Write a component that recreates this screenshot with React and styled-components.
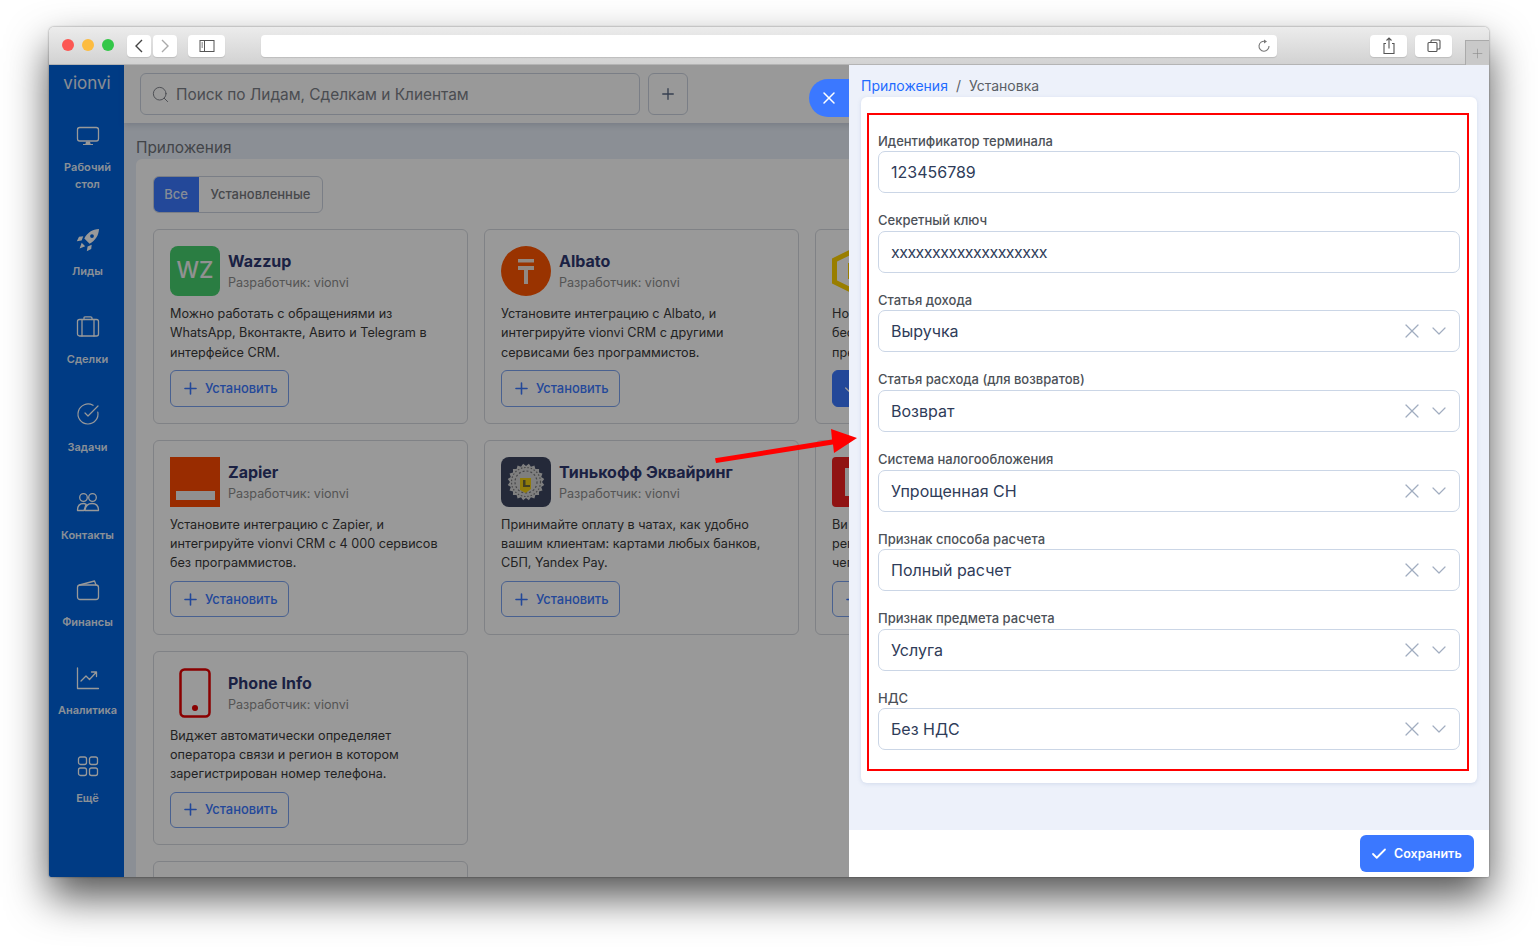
import React from "react";
import styled, { createGlobalStyle } from "styled-components";
import { X, ChevronDown, Check, Plus, Search, CircleCheckBig } from "lucide-react";

const GlobalStyle = createGlobalStyle`
  html, body {
    margin: 0;
    height: 948px;
    overflow: hidden;
    background: #fff;
    font-family: Inter, "Noto Sans", sans-serif;
  }
  * { box-sizing: border-box; }
`;

const Page = styled.div`
  padding: 27px 49px 0;
`;

const Window = styled.div`
  width: 1440px;
  height: 850px;
  border-radius: 5px 5px 2px 2px;
  box-shadow: 0 20px 42px rgba(0, 0, 0, 0.68), 0 0 2px rgba(0, 0, 0, 0.5);
  display: flex;
  flex-direction: column;
  overflow: hidden;
`;

const TitleBar = styled.div`
  height: 38px;
  flex: none;
  display: flex;
  align-items: flex-start;
  padding: 8px 0 0 13px;
  background: linear-gradient(#ececec, #d2d2d2);
  border-bottom: 1px solid #b4b4b4;
`;

const Light = styled.span`
  width: 12px;
  height: 12px;
  margin: 4px 8px 0 0;
  border-radius: 50%;
  background: ${(p) => p.$color};
`;

const ChromeButton = styled.div`
  width: ${(p) => p.$w}px;
  height: 22px;
  margin-left: ${(p) => p.$ml}px;
  background: #fff;
  border-radius: 4px;
  box-shadow: 0 1px 1px rgba(0, 0, 0, 0.12);
  display: flex;
  align-items: center;
  justify-content: center;
  color: ${(p) => p.$color || "#555"};
`;

const UrlBar = styled.div`
  width: 1016px;
  height: 22px;
  margin-left: 36px;
  padding-right: 6px;
  background: #fff;
  border-radius: 4px;
  box-shadow: 0 1px 1px rgba(0, 0, 0, 0.12);
  display: flex;
  align-items: center;
  justify-content: flex-end;
  color: #777;
`;

const NewTab = styled.div`
  width: 24px;
  height: 25px;
  margin: 5px 0 0 13px;
  background: #c9c9c9;
  border: 1px solid #aaa;
  border-right: 0;
  border-bottom: 0;
  color: #8a8a8a;
  display: flex;
  align-items: center;
  justify-content: center;
`;

const AppFrame = styled.div`
  position: relative;
  flex: 1;
  display: flex;
  overflow: hidden;
  background: #e8eef8;
`;

const Sidebar = styled.nav`
  width: 75px;
  flex: none;
  background: #0063dd;
  display: flex;
  flex-direction: column;
  align-items: center;
`;

const Logo = styled.div`
  height: 58.5px;
  padding: 5px 0 0 1px;
  font-size: 17px;
  line-height: 26px;
  font-weight: 400;
  color: #e6ecf5;
`;

const NavItem = styled.div`
  width: 75px;
  display: flex;
  flex-direction: column;
  align-items: center;
  padding: 0 0 35.8px 2px;
  color: #fff;
`;

const NavLabel = styled.span`
  margin-top: 11.5px;
  width: 66px;
  text-align: center;
  font-size: 11px;
  line-height: 16.5px;
  font-weight: 600;
  color: rgba(255, 255, 255, 0.92);
`;

const Main = styled.main`
  flex: 1;
  min-width: 0;
  display: flex;
  flex-direction: column;
`;

const TopBar = styled.header`
  height: 58px;
  flex: none;
  background: #fff;
  display: flex;
  gap: 8px;
  padding: 8px 16px;
  box-shadow: 0 2px 6px rgba(60, 80, 110, 0.2);
`;

const SearchBox = styled.div`
  width: 500px;
  height: 42px;
  border: 1px solid #ccd3df;
  border-radius: 6px;
  display: flex;
  align-items: center;
  padding-left: 10px;
  gap: 6px;
  font-size: 15.4px;
  color: #7c8088;
`;

const AddButton = styled.div`
  width: 40px;
  height: 42px;
  border: 1px solid #ccd3df;
  border-radius: 6px;
  display: flex;
  align-items: center;
  justify-content: center;
  color: #5a6a85;
`;

const PageTitle = styled.h1`
  margin: 14px 0 0 12px;
  font-size: 15.4px;
  line-height: 22px;
  font-weight: 400;
  color: #6f737a;
`;

const Panel = styled.section`
  flex: 1;
  margin-left: 12px;
  padding: 17px;
  background: #fff;
  border-radius: 6px 0 0 0;
`;

const Tabs = styled.div`
  display: inline-flex;
  height: 37px;
  border: 1px solid #ccd3df;
  border-radius: 6px;
  overflow: hidden;
  margin-bottom: 16px;
`;

const Tab = styled.div`
  padding: 0 11.3px 2px;
  margin: ${(p) => (p.$active ? "-1px 0 -1px -1px" : "0")};
  display: flex;
  align-items: center;
  font-size: 13px;
  font-weight: 500;
  background: ${(p) => (p.$active ? "#3b78ff" : "transparent")};
  color: ${(p) => (p.$active ? "#dfe8fa" : "#77797e")};
`;

const CardGrid = styled.div`
  display: grid;
  grid-template-columns: repeat(4, 315px);
  grid-auto-rows: 194.8px;
  gap: 16px;
`;

const Card = styled.article`
  border: 1px solid #d6d9df;
  border-radius: 6px;
  padding: 16px;
`;

const CardHead = styled.div`
  display: flex;
  gap: 8px;
  height: 50px;
  align-items: center;
`;

const CardHeadText = styled.div`
  padding-top: 2px;
`;

const CardLogo = styled.div`
  width: 50px;
  height: 50px;
  flex: none;
  border-radius: ${(p) => p.$radius || 0};
  background: ${(p) => p.$bg || "transparent"};
  display: flex;
  align-items: center;
  justify-content: center;
  overflow: hidden;
`;

const WzMark = styled.span`
  font-size: 22.5px;
  line-height: 24px;
  padding-bottom: 2px;
  font-weight: 500;
  color: #f2f2f2;
`;

const CardTitle = styled.div`
  font-size: 16px;
  line-height: 21px;
  font-weight: 700;
  color: #2e3770;
  white-space: nowrap;
`;

const CardVendor = styled.div`
  font-size: 12.6px;
  line-height: 21px;
  color: #8d8d8d;
`;

const CardText = styled.p`
  margin: 8px 0 8px;
  height: 58px;
  font-size: 12.65px;
  line-height: 19.3px;
  color: #3a3a3a;
  white-space: pre-line;
`;

const InstallButton = styled.div`
  width: 119px;
  height: 36.5px;
  border: 1px solid ${(p) => (p.$filled ? "#3b78ff" : "#7ba2f0")};
  background: ${(p) => (p.$filled ? "#3b78ff" : "transparent")};
  border-radius: 6px;
  display: flex;
  align-items: center;
  padding-left: 10px;
  gap: 5px;
  font-size: 12.9px;
  font-weight: 500;
  color: ${(p) => (p.$filled ? "#fff" : "#3b78ff")};
`;

const Backdrop = styled.div`
  position: absolute;
  inset: 0;
  background: rgba(0, 0, 0, 0.4);
`;

const Drawer = styled.aside`
  position: absolute;
  top: 0;
  right: 0;
  bottom: 0;
  width: 640px;
  background: #edf1fa;
  display: flex;
  flex-direction: column;
`;

const CloseTab = styled.div`
  position: absolute;
  left: -40px;
  top: 14px;
  width: 40px;
  height: 38px;
  border-radius: 19px 0 0 19px;
  background: #3b78ff;
  color: #fff;
  display: flex;
  align-items: center;
  justify-content: center;
`;

const Breadcrumbs = styled.div`
  height: 32px;
  padding: 11px 12px 0;
  display: flex;
  gap: 8px;
  font-size: 14px;
  line-height: 20px;
  color: #5b5f66;
`;

const CrumbLink = styled.span`
  color: #1f6bff;
`;

const FormCard = styled.div`
  margin: 0 12px;
  padding: 16px 8px 12px 6px;
  background: #fff;
  border-radius: 6px;
  box-shadow: 0 1px 4px rgba(90, 120, 180, 0.18);
`;

const RedFrame = styled.div`
  border: 2px solid #ff0000;
  padding: 14.6px 7px 2.8px 9px;
`;

const Field = styled.div`
  margin-bottom: 16px;
`;

const FieldLabel = styled.label`
  display: block;
  height: 21.6px;
  font-size: 13px;
  line-height: 22.6px;
  font-weight: 500;
  color: #4c5158;
`;

const FieldBox = styled.div`
  height: 42px;
  border: 1px solid #cbd6e6;
  border-radius: 7px;
  display: flex;
  align-items: center;
  padding: 0 8px 0 12px;
  font-size: 16px;
  color: #2f3c59;
`;

const FieldValue = styled.span`
  flex: 1;
  letter-spacing: ${(p) => (p.$masked ? "-0.53px" : "0")};
`;

const FieldIcons = styled.span`
  display: flex;
  align-items: center;
  gap: 3px;
  color: #a1adc0;
`;

const Footer = styled.footer`
  margin-top: auto;
  height: 47px;
  flex: none;
  background: #fff;
  display: flex;
  justify-content: flex-end;
  padding: 5px 15px;
`;

const SaveButton = styled.div`
  width: 114px;
  height: 37px;
  background: #3b78ff;
  border-radius: 6px;
  display: flex;
  align-items: center;
  padding-left: 10px;
  gap: 6px;
  font-size: 12.5px;
  font-weight: 600;
  color: #fff;
`;

const ArrowMark = styled.svg`
  position: absolute;
  left: 660px;
  top: 355px;
`;

const HiddenSlot = styled.div`
  visibility: hidden;
`;

const stroke = { fill: "none", stroke: "currentColor", strokeWidth: 1.3, strokeLinecap: "round", strokeLinejoin: "round" };

function NavIcon({ children }) {
  return (
    <svg width="24" height="24" viewBox="0 0 24 24" {...stroke}>
      {children}
    </svg>
  );
}

const navItems = [
  {
    label: "Рабочий стол",
    icon: (
      <NavIcon>
        <rect x="1.5" y="3.500" width="21" height="13.5" rx="2.2" />
        <path d="M10 17.500h4l.6 2.500H17v1H7v-1h2.400z" fill="currentColor" stroke="none" />
      </NavIcon>
    ),
  },
  {
    label: "Лиды",
    icon: (
      <svg width="24" height="24" viewBox="0 0 24 24" fill="currentColor">
        <path
          fillRule="evenodd"
          d="M23 1C16.500 1.300 11.500 4.500 8.300 10.400l5.300 5.300C19.500 12.500 22.700 7.500 23 1zM16 6.200a1.900 1.900 0 1 1 0 3.800 1.900 1.900 0 0 1 0-3.800z"
        />
        <path d="M7.300 8.300 3 8.800.8 13.200l4.800-.8zM15.700 16.700l-.5 4.300-4.400 2.200.8-4.800zM5.700 14.800 3.600 20.400l5.600-2.100z" />
      </svg>
    ),
  },
  {
    label: "Сделки",
    icon: (
      <NavIcon>
        <rect x="1.5" y="3.500" width="21" height="16.5" rx="2" />
        <path d="M6 3.500V20M18 3.500V20M8 3.500V2Q8 .8 9.500 .8h5Q16 .8 16 2v1.500" />
      </NavIcon>
    ),
  },
  { label: "Задачи", icon: <CircleCheckBig size={24} strokeWidth={1.2} style={{ marginTop: -1, marginBottom: 1 }} /> },
  {
    label: "Контакты",
    icon: (
      <NavIcon>
        <circle cx="7.500" cy="6.500" r="3.800" />
        <circle cx="16.500" cy="6.500" r="3.800" />
        <path d="M1.500 19.500c0-5 3-7 6-7 1 0 1.800.3 2.600.8L8 19.500zM9 19.500c.5-5 3.500-7 7-7s6.500 2 6.500 7z" />
      </NavIcon>
    ),
  },
  {
    label: "Финансы",
    icon: (
      <NavIcon>
        <rect x="1.5" y="6" width="21" height="14.500" rx="2.500" />
        <path d="M3.500 6 18.500 2 20 6" />
      </NavIcon>
    ),
  },
  {
    label: "Аналитика",
    icon: (
      <NavIcon>
        <path d="M1.500 1V21.500H22.500" />
        <path d="M5 14l5-5 3.500 3.500L20 5.500M15.500 5H20.500V9.500" />
      </NavIcon>
    ),
  },
  {
    label: "Ещё",
    icon: (
      <NavIcon>
        <rect x="2.500" y="2" width="8" height="7.500" rx="2" />
        <rect x="13.500" y="2" width="8" height="7.500" rx="2" />
        <rect x="2.500" y="13" width="8" height="7.500" rx="2" />
        <rect x="13.500" y="13" width="8" height="7.500" rx="2" />
      </NavIcon>
    ),
  },
];

function TinkoffEmblem() {
  const points = [];
  for (let i = 0; i < 40; i++) {
    const r = i % 2 ? 18.5 : 16;
    const a = (i / 40) * Math.PI * 2;
    points.push(`${25 + r * Math.cos(a)},${25 + r * Math.sin(a)}`);
  }
  return (
    <svg width="50" height="50" viewBox="0 0 50 50">
      <polygon points={points.join(" ")} fill="#d4d4d4" />
      <circle cx="25" cy="25" r="14.500" fill="none" stroke="#77777a" strokeWidth="1.200" strokeDasharray="1.500 1.800" />
      <circle cx="25" cy="25" r="11" fill="none" stroke="#77777a" strokeWidth="1.200" strokeDasharray="2 2" />
      <path d="M19 21h11v11l-5.500 4L19 33z" fill="#f2cf11" />
      <path d="M22 23h2.500v5H29v2h-7z" fill="#6f6a3a" />
    </svg>
  );
}

// the third column sits under the drawer, only the start of each line shows
const cards = [
  {
    title: "Wazzup",
    text: "Можно работать с обращениями из WhatsApp, Вконтакте, Авито и Telegram в интерфейсе CRM.",
    logo: (
      <CardLogo $bg="#46d06e" $radius="8px">
        <WzMark>WZ</WzMark>
      </CardLogo>
    ),
  },
  {
    title: "Albato",
    text: "Установите интеграцию с Albato, и интегрируйте vionvi CRM с другими сервисами без программистов.",
    logo: (
      <CardLogo $bg="#ff5500" $radius="50%">
        <svg width="50" height="50" viewBox="0 0 50 50">
          <path d="M17 13h16v3.500H17zM17 20h16v4h-6v14h-4V24h-6z" fill="#f4e4da" />
        </svg>
      </CardLogo>
    ),
  },
  {
    clipped: true,
    text: "Но\nбес\nпре",
    installed: true,
    logo: (
      <CardLogo>
        <svg width="50" height="50" viewBox="0 0 50 50">
          <path d="M25 3 46 14v22L25 47 2.500 36V14z" fill="none" stroke="#ffd200" strokeWidth="5" />
          <rect x="16" y="17" width="16" height="16" fill="#ffd200" />
        </svg>
      </CardLogo>
    ),
  },
  { empty: true },
  {
    title: "Zapier",
    text: "Установите интеграцию с Zapier, и интегрируйте vionvi CRM с 4 000 сервисов без программистов.",
    logo: (
      <CardLogo $bg="#ff4a00">
        <svg width="50" height="50" viewBox="0 0 50 50">
          <rect x="6" y="34" width="39" height="9" fill="#f0f0f0" />
        </svg>
      </CardLogo>
    ),
  },
  {
    title: "Тинькофф Эквайринг",
    text: "Принимайте оплату в чатах, как удобно вашим клиентам: картами любых банков, СБП, Yandex Pay.",
    logo: (
      <CardLogo $bg="#3c4560" $radius="8px">
        <TinkoffEmblem />
      </CardLogo>
    ),
  },
  {
    clipped: true,
    text: "Ви\nрег\nчег",
    logo: (
      <CardLogo $bg="#f02020" $radius="4px">
        <svg width="50" height="50" viewBox="0 0 50 50">
          <rect x="13" y="11" width="26" height="28" fill="#f0f0f0" />
        </svg>
      </CardLogo>
    ),
  },
  { empty: true },
  {
    title: "Phone Info",
    text: "Виджет автоматически определяет оператора связи и регион в котором зарегистрирован номер телефона.",
    logo: (
      <CardLogo>
        <svg width="50" height="50" viewBox="0 0 50 50">
          <rect x="10.500" y="1.500" width="29" height="47" rx="4" fill="none" stroke="#e60000" strokeWidth="2.500" />
          <circle cx="25" cy="40" r="3" fill="#e60000" />
        </svg>
      </CardLogo>
    ),
  },
  { empty: true },
  { empty: true },
  { empty: true },
  { blank: true },
];

const fields = [
  { label: "Идентификатор терминала", value: "123456789" },
  { label: "Секретный ключ", value: "xxxxxxxxxxxxxxxxxxx", masked: true },
  { label: "Статья дохода", value: "Выручка", select: true },
  { label: "Статья расхода (для возвратов)", value: "Возврат", select: true },
  { label: "Система налогообложения", value: "Упрощенная СН", select: true },
  { label: "Признак способа расчета", value: "Полный расчет", select: true },
  { label: "Признак предмета расчета", value: "Услуга", select: true },
  { label: "НДС", value: "Без НДС", select: true },
];

export default function App() {
  return (
    <Page>
      <GlobalStyle />
      <Window>
        <TitleBar>
          <Light $color="#fc5753" />
          <Light $color="#fdbc40" />
          <Light $color="#33c748" />
          <ChromeButton $w={24} $ml={5}>
            <svg width="14" height="16" viewBox="0 0 14 16" fill="none" stroke="#444" strokeWidth="1.400">
              <path d="M10 2 4 8l6 6" />
            </svg>
          </ChromeButton>
          <ChromeButton $w={24} $ml={2}>
            <svg width="14" height="16" viewBox="0 0 14 16" fill="none" stroke="#aaa" strokeWidth="1.400">
              <path d="m4 2 6 6-6 6" />
            </svg>
          </ChromeButton>
          <ChromeButton $w={37} $ml={11}>
            <svg width="16" height="12" viewBox="0 0 16 12" fill="none" stroke="#555">
              <rect x="1" y=".5" width="14" height="11" />
              <path d="M5.500.5v11M2.500 3h1.500M2.500 5h1.500M2.500 7h1.500" />
            </svg>
          </ChromeButton>
          <UrlBar>
            <svg width="14" height="14" viewBox="0 0 14 14" fill="none" stroke="#777" strokeWidth="1.100">
              <path d="M8 2.300A5 5 0 1 0 12 7" />
              <path d="M7 .5 10 2.500 7 4.500z" fill="#777" stroke="none" />
            </svg>
          </UrlBar>
          <ChromeButton $w={37} $ml={93}>
            <svg width="14" height="18" viewBox="0 0 14 18" fill="none" stroke="#555" strokeWidth="1.100">
              <path d="M4 6.500H2v10h10v-10h-2M7 11.500V1M4.500 3.500 7 1l2.500 2.500" />
            </svg>
          </ChromeButton>
          <ChromeButton $w={37} $ml={8}>
            <svg width="14" height="14" viewBox="0 0 14 14" fill="none" stroke="#555" strokeWidth="1.100">
              <rect x="1" y="3.500" width="9" height="9" rx="1" />
              <path d="M4 3.500V2a1 1 0 0 1 1-1h7a1 1 0 0 1 1 1v7a1 1 0 0 1-1 1h-2" />
            </svg>
          </ChromeButton>
          <NewTab>
            <Plus size={15} strokeWidth={1} />
          </NewTab>
        </TitleBar>
        <AppFrame>
          <Sidebar>
            <Logo>vionvi</Logo>
            {navItems.map((item) => (
              <NavItem key={item.label}>
                {item.icon}
                <NavLabel>{item.label}</NavLabel>
              </NavItem>
            ))}
          </Sidebar>
          <Main>
            <TopBar>
              <SearchBox>
                <Search size={19} strokeWidth={1.200} />
                Поиск по Лидам, Сделкам и Клиентам
              </SearchBox>
              <AddButton>
                <Plus size={18} strokeWidth={1.800} />
              </AddButton>
            </TopBar>
            <PageTitle>Приложения</PageTitle>
            <Panel>
              <Tabs>
                <Tab $active>Все</Tab>
                <Tab>Установленные</Tab>
              </Tabs>
              <CardGrid>
                {cards.map((card, i) =>
                  card.empty ? (
                    <HiddenSlot key={i} />
                  ) : card.blank ? (
                    <Card key={i} />
                  ) : (
                    <Card key={i}>
                      <CardHead>
                        {card.logo}
                        {!card.clipped && (
                          <CardHeadText>
                            <CardTitle>{card.title}</CardTitle>
                            <CardVendor>Разработчик: vionvi</CardVendor>
                          </CardHeadText>
                        )}
                      </CardHead>
                      <CardText>{card.text}</CardText>
                      <InstallButton $filled={card.installed}>
                        {card.installed ? <Check size={16} /> : <Plus size={19} strokeWidth={2} />}
                        {!card.clipped && "Установить"}
                      </InstallButton>
                    </Card>
                  )
                )}
              </CardGrid>
            </Panel>
          </Main>
          <Backdrop />
          <Drawer>
            <CloseTab>
              <X size={20} strokeWidth={1.800} />
            </CloseTab>
            <Breadcrumbs>
              <CrumbLink>Приложения</CrumbLink>
              <span>/</span>
              <span>Установка</span>
            </Breadcrumbs>
            <FormCard>
              <RedFrame>
                {fields.map((field) => (
                  <Field key={field.label}>
                    <FieldLabel>{field.label}</FieldLabel>
                    <FieldBox>
                      <FieldValue $masked={field.masked}>{field.value}</FieldValue>
                      {field.select && (
                        <FieldIcons>
                          <X size={24} strokeWidth={1.200} />
                          <ChevronDown size={24} strokeWidth={1.200} />
                        </FieldIcons>
                      )}
                    </FieldBox>
                  </Field>
                ))}
              </RedFrame>
            </FormCard>
            <Footer>
              <SaveButton>
                <Check size={18} strokeWidth={2.400} />
                Сохранить
              </SaveButton>
            </Footer>
          </Drawer>
          <ArrowMark width="160" height="50" viewBox="0 0 160 50">
            <polygon points="6,38.300 123,19.500 122,9 148,18 125,33 124,24.500 7,43" fill="#ff0000" />
          </ArrowMark>
        </AppFrame>
      </Window>
    </Page>
  );
}
